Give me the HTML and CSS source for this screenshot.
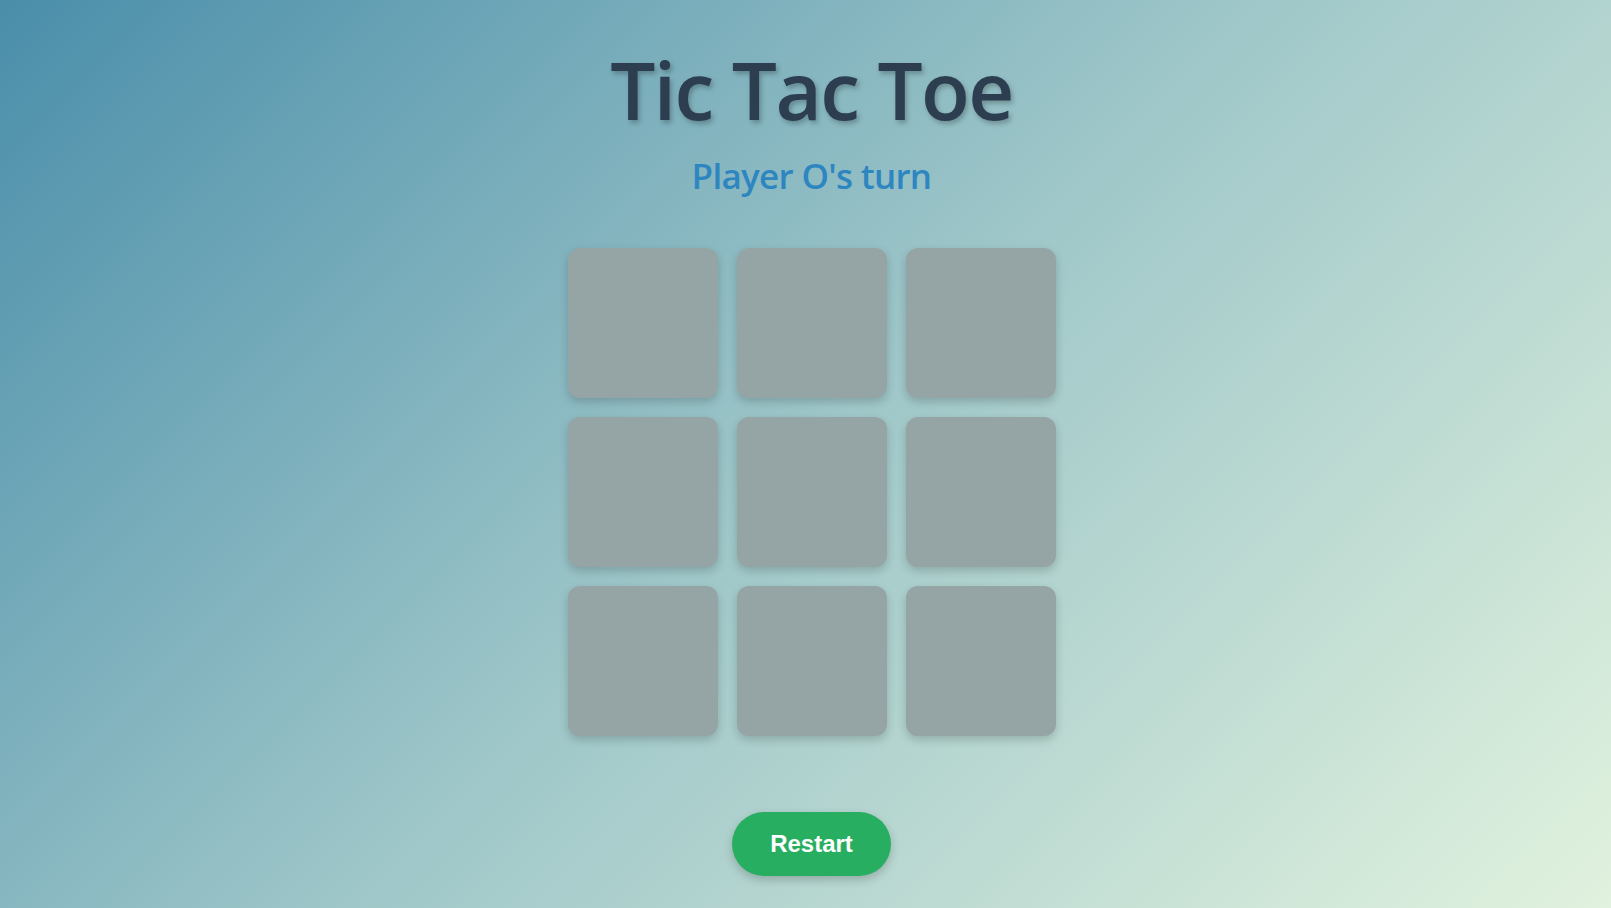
FILE: index.html
```html
<!DOCTYPE html>
<html lang="en">
<head>
<meta charset="utf-8">
<title>Tic Tac Toe</title>
<link rel="stylesheet" href="styles.css">
</head>
<body>
<main class="game">
  <h1 class="title">Tic Tac Toe</h1>
  <p class="status">Player O's turn</p>
  <div class="board">
    <div class="cell"></div>
    <div class="cell"></div>
    <div class="cell"></div>
    <div class="cell"></div>
    <div class="cell"></div>
    <div class="cell"></div>
    <div class="cell"></div>
    <div class="cell"></div>
    <div class="cell"></div>
  </div>
  <button class="restart">Restart</button>
</main>
</body>
</html>
```
FILE: styles.css
```css
html, body {
  margin: 0;
  padding: 0;
}
body {
  min-height: 100vh;
  background: linear-gradient(135deg, #4a8eaa 0%, #9fc7c9 50%, #e1f2de 100%);
  font-family: "Open Sans", "Noto Sans", sans-serif;
  overflow: hidden;
}
.game {
  display: flex;
  flex-direction: column;
  align-items: center;
  padding-left: 12px;
}
.title {
  margin: 41px 0 0;
  font-size: 80px;
  line-height: 1.2;
  font-weight: 600;
  letter-spacing: -1.6px;
  color: #2c3e50;
  text-shadow: 2px 3px 5px rgba(0, 0, 0, 0.25);
}
.status {
  margin: 18px 0 0;
  font-size: 35px;
  line-height: 1.2;
  font-weight: 600;
  letter-spacing: -0.7px;
  color: #2e86c1;
}
.board {
  margin-top: 51px;
  display: grid;
  grid-template-columns: repeat(3, 150px);
  grid-template-rows: repeat(3, 150px);
  gap: 19px;
}
.cell {
  background: #95a5a5;
  border-radius: 12px;
  box-shadow: 0 4px 10px rgba(0, 0, 0, 0.18);
}
.restart {
  margin-top: 76px;
  padding: 18px 38px;
  border: none;
  border-radius: 40px;
  background: #27ae60;
  color: #ffffff;
  font-family: "Liberation Sans", Arial, sans-serif;
  font-size: 24px;
  font-weight: 700;
  line-height: 1.15;
  box-shadow: 0 4px 10px rgba(0, 0, 0, 0.2);
  cursor: pointer;
}
```
